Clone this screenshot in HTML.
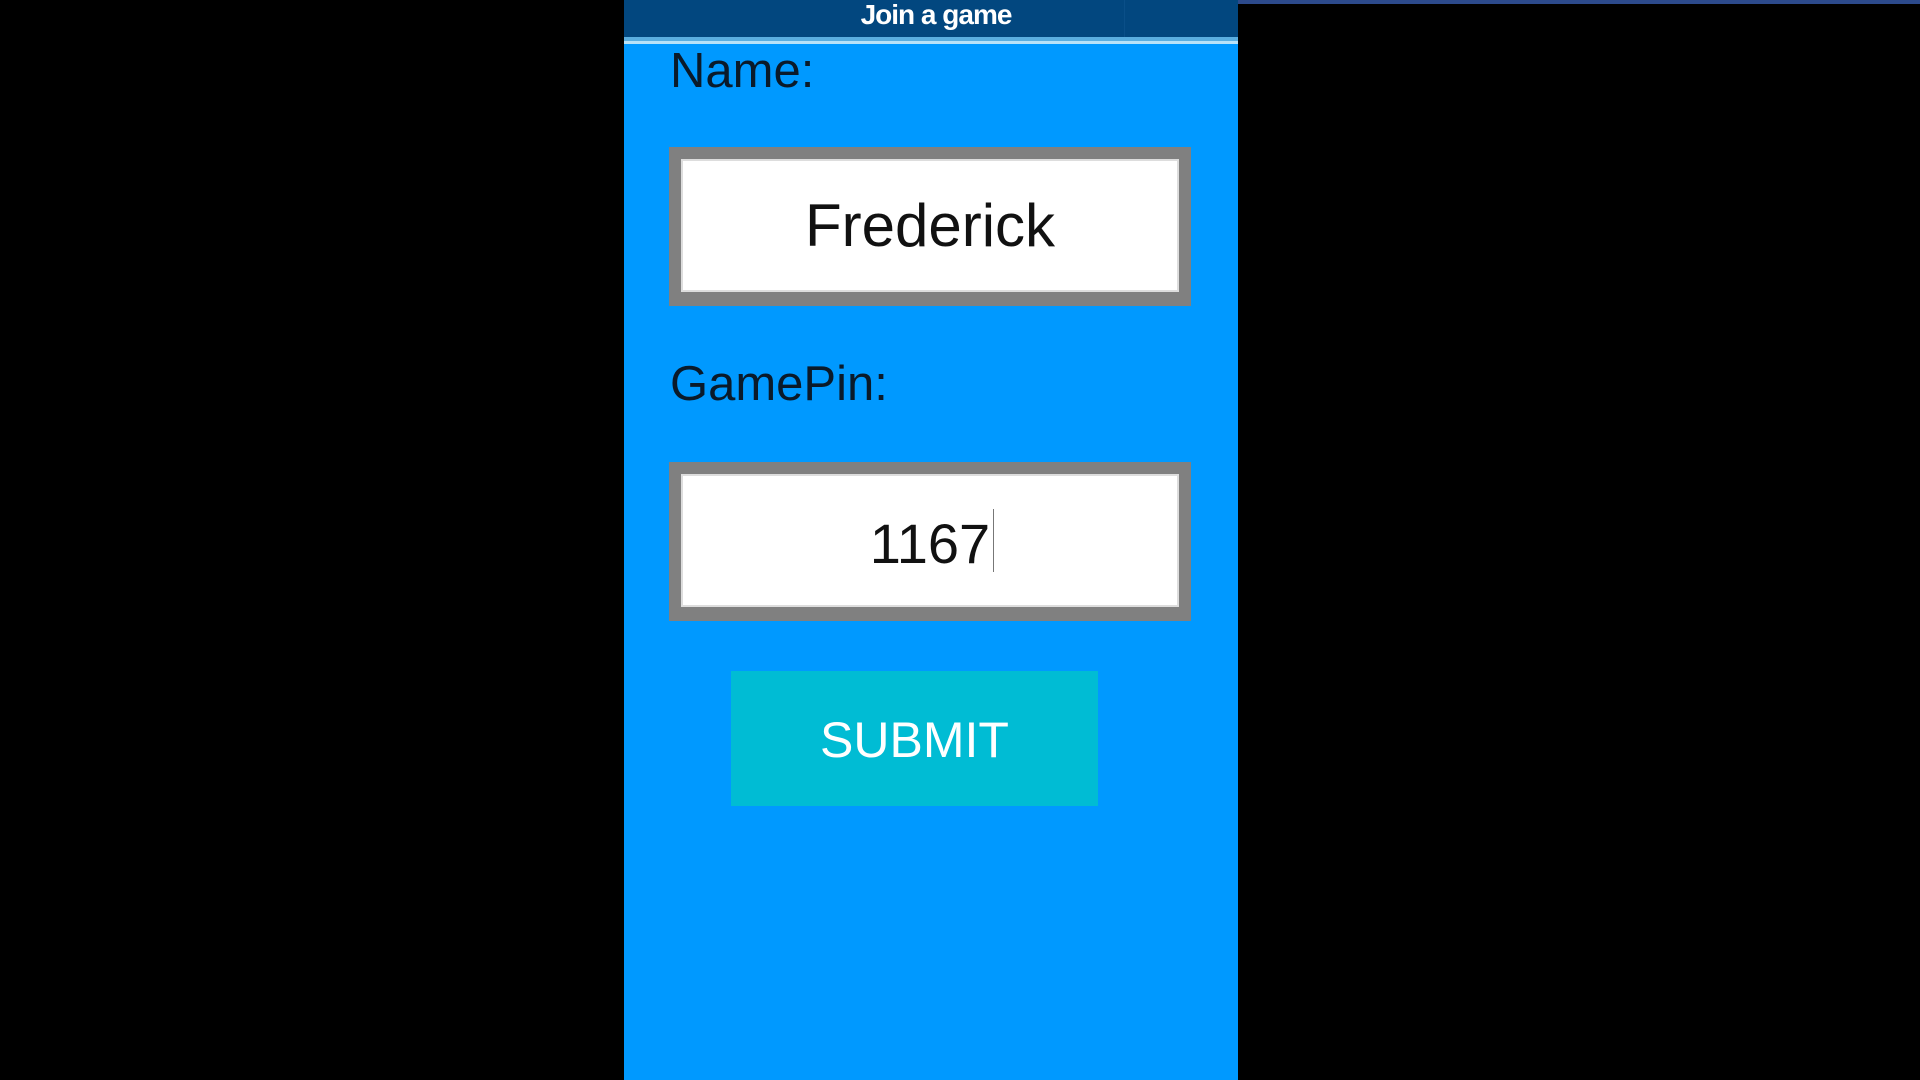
<!DOCTYPE html>
<html><head><meta charset="utf-8"><style>
html,body{margin:0;padding:0;width:1920px;height:1080px;background:#000;overflow:hidden;font-family:"Liberation Sans",sans-serif}
.a{position:absolute;line-height:1;white-space:nowrap}
</style></head><body>
<div style="position:absolute;left:1238px;top:0;width:682px;height:4px;background:#2c4a8c"></div>
<div style="position:absolute;left:624px;top:0;width:614px;height:1080px;background:#0099ff"></div>
<div style="position:absolute;left:624px;top:0;width:614px;height:39px;background:#02477f"></div>
<div style="position:absolute;left:1124px;top:0;width:1px;height:39px;background:#0a4f88"></div>
<div style="position:absolute;left:624px;top:37px;width:614px;height:4px;background:#5aaee0"></div>
<div style="position:absolute;left:624px;top:41px;width:614px;height:3px;background:#b8e2f8"></div>
<div class="a" style="left:624px;width:624px;text-align:center;top:1px;font-size:28px;font-weight:bold;color:#fff;letter-spacing:-1px">Join a game</div>
<div class="a" style="left:670px;top:47px;font-size:49px;color:#0a1a2a">Name:</div>
<div style="position:absolute;left:669px;top:147px;width:498px;height:133px;border:12px solid #808080;border-bottom-width:14px;background:#fff;box-shadow:inset 0 0 0 2px #ddd"></div>
<div class="a" style="left:669px;width:522px;text-align:center;top:196px;font-size:60px;color:#111">Frederick</div>
<div class="a" style="left:670px;top:360px;font-size:49px;color:#0a1a2a">GamePin:</div>
<div style="position:absolute;left:669px;top:462px;width:498px;height:133px;border:12px solid #808080;border-bottom-width:14px;background:#fff;box-shadow:inset 0 0 0 2px #ddd"></div>
<div class="a" style="left:669px;width:522px;text-align:center;top:516px;font-size:56px;color:#111">1167</div>
<div style="position:absolute;left:993px;top:509px;width:1px;height:63px;background:#777"></div>
<div style="position:absolute;left:731px;top:671px;width:367px;height:135px;background:#00bcd4"></div>
<div class="a" style="left:731px;width:367px;text-align:center;top:715px;font-size:50px;color:#fff">SUBMIT</div>
</body></html>
